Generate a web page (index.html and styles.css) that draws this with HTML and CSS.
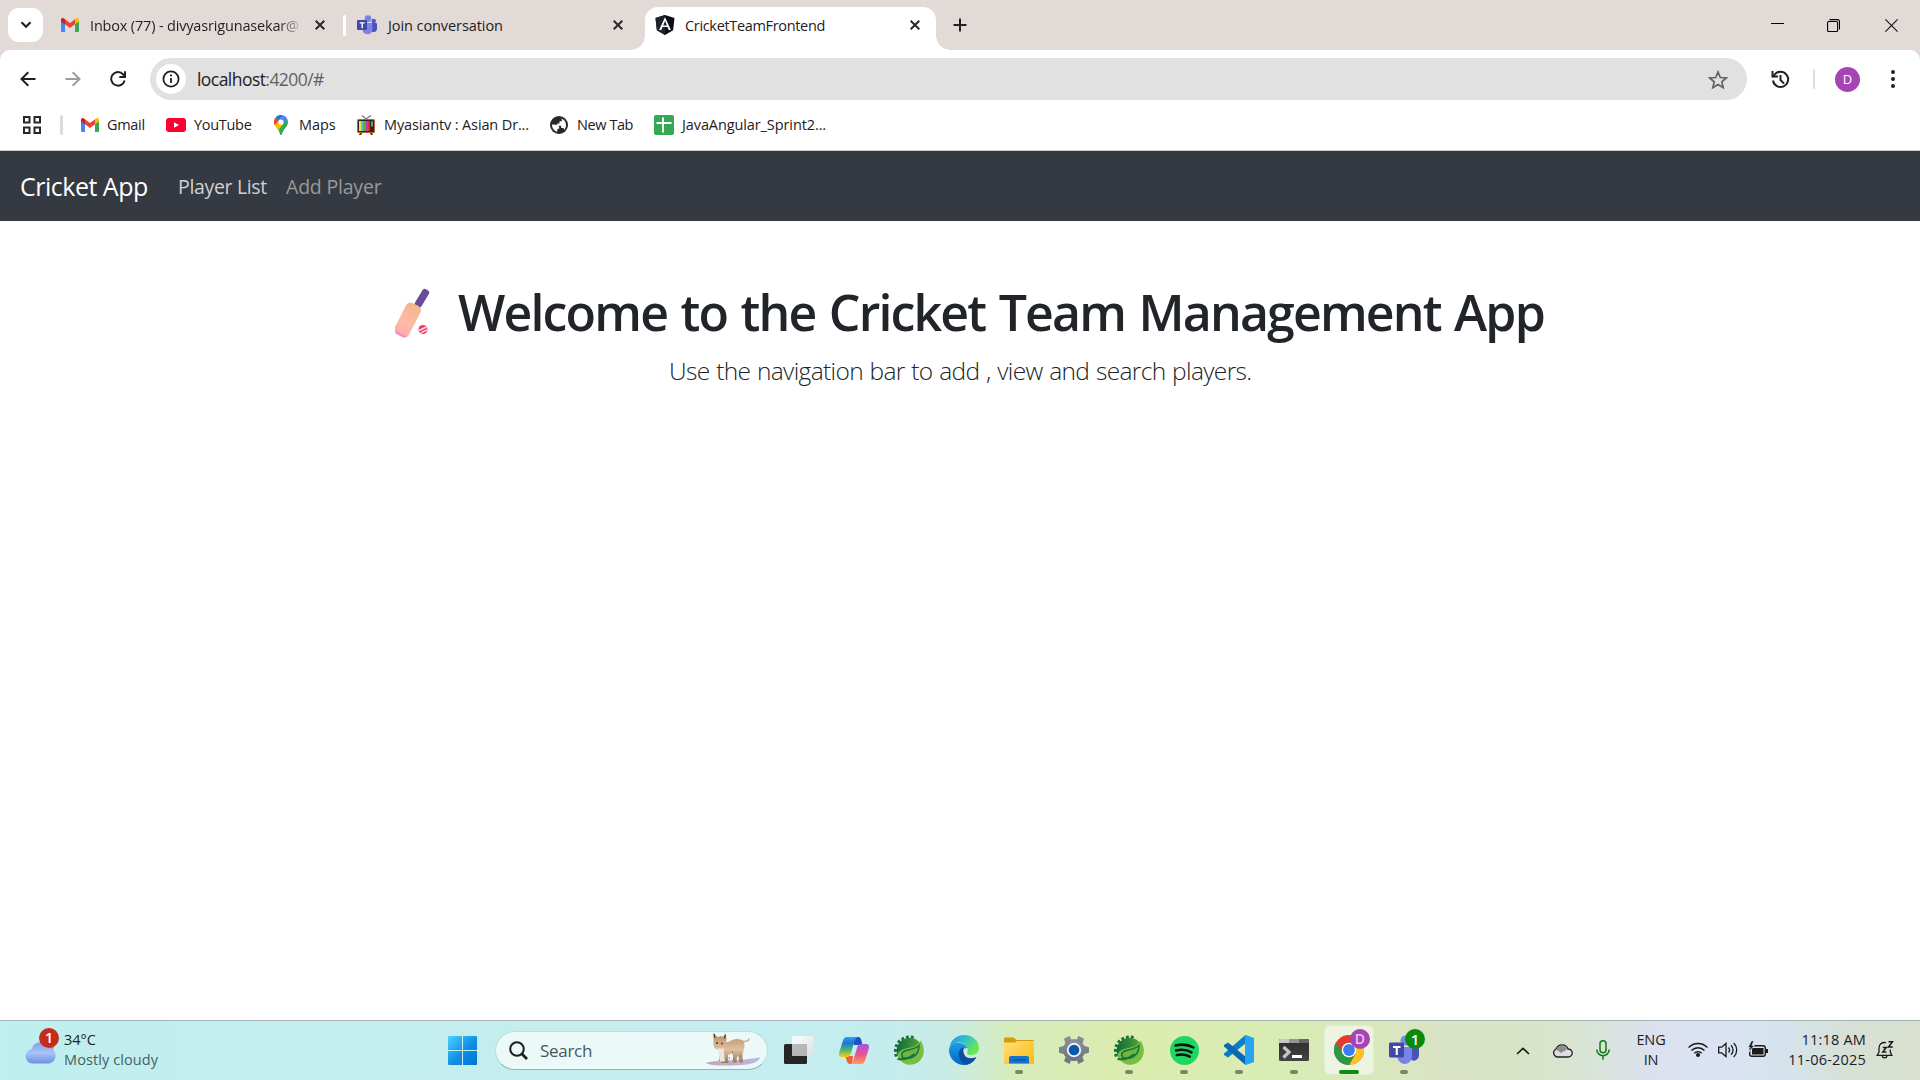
FILE: index.html
```html
<!DOCTYPE html>
<html lang="en">
<head>
<meta charset="utf-8">
<title>CricketTeamFrontend</title>
<link rel="stylesheet" href="styles.css">
</head>
<body>
<svg class="defs" aria-hidden="true">
  <defs>
    <linearGradient id="spring-bg" x1="0" y1="0" x2="1" y2="0"><stop offset="0" stop-color="#0c6b37"/><stop offset="1" stop-color="#58a63a"/></linearGradient>
    <linearGradient id="win" x1="0" y1="0" x2="1" y2="1"><stop offset="0" stop-color="#4dd0ff"/><stop offset=".55" stop-color="#108ee4"/><stop offset="1" stop-color="#0074d6"/></linearGradient>
    <linearGradient id="cloud" x1="0" y1="0" x2="0" y2="1"><stop offset="0" stop-color="#7f9fe8"/><stop offset=".5" stop-color="#a9c4f8"/><stop offset="1" stop-color="#6c90e0"/></linearGradient>
    <linearGradient id="cop1" x1="0" y1="0" x2="0" y2="1"><stop offset="0" stop-color="#1fa5ee"/><stop offset=".3" stop-color="#2373d8"/><stop offset=".65" stop-color="#4bb56c"/><stop offset="1" stop-color="#f8d30b"/></linearGradient>
    <linearGradient id="cop2" x1="0" y1="0" x2="0" y2="1"><stop offset="0" stop-color="#a553ea"/><stop offset=".55" stop-color="#f0528a"/><stop offset="1" stop-color="#ffa250"/></linearGradient>
    <linearGradient id="edge1" x1="0" y1="0" x2="1" y2=".5"><stop offset="0" stop-color="#1e8fe0"/><stop offset=".5" stop-color="#30bfd0"/><stop offset="1" stop-color="#66ea50"/></linearGradient>
    <linearGradient id="edge2" x1="0" y1="0" x2="0" y2="1"><stop offset="0" stop-color="#209be4"/><stop offset="1" stop-color="#0067c6"/></linearGradient>
    <linearGradient id="fold" x1="0" y1="0" x2="1" y2="1"><stop offset="0" stop-color="#ffe07a"/><stop offset="1" stop-color="#fdb913"/></linearGradient>
    <linearGradient id="gear" x1="0" y1="0" x2="0" y2="1"><stop offset="0" stop-color="#8b949e"/><stop offset="1" stop-color="#68717c"/></linearGradient>
    <linearGradient id="bat" x1="0" y1="0" x2="0" y2="1"><stop offset="0" stop-color="#f5b48f"/><stop offset=".6" stop-color="#fdbba6"/><stop offset=".88" stop-color="#fdb0a8"/><stop offset="1" stop-color="#fa7dc8"/></linearGradient>
    <linearGradient id="term" x1="0" y1="0" x2="0" y2="1"><stop offset="0" stop-color="#2c2c2c"/><stop offset="1" stop-color="#444"/></linearGradient>
    <linearGradient id="tv1" x1="0" y1="0" x2="1" y2="1"><stop offset="0" stop-color="#fff"/><stop offset="1" stop-color="#dedede"/></linearGradient>
    <linearGradient id="shadow" x1="0" y1="0" x2="1" y2="0"><stop offset="0" stop-color="#c9a5b4"/><stop offset="1" stop-color="#b9b8e2"/></linearGradient>
    <linearGradient id="fur" x1="0" y1="0" x2="0" y2="1"><stop offset="0" stop-color="#b98a64"/><stop offset=".55" stop-color="#dfc0a2"/><stop offset="1" stop-color="#94785f"/></linearGradient>
    <symbol id="gmail" viewBox="0 0 18 14">
      <path fill="#4285f4" d="M0 2.5 4 5v9H1.3A1.3 1.3 0 0 1 0 12.7z"/>
      <path fill="#34a853" d="M14 5l4-2.5v10.2a1.3 1.3 0 0 1-1.3 1.3H14z"/>
      <path fill="#ea4335" d="M4 1.3 9 5l5-3.700v5L9 10 4 6.300z"/>
      <path fill="#c5221f" d="M0 2C0 .2 2-.6 3.400.8L4 1.300v5L0 3.400z"/>
      <path fill="#fbbc04" d="M14 1.300l.6-.5C16-.6 18 .2 18 2v1.400l-4 2.900z"/>
    </symbol>
    <symbol id="teams" viewBox="0 0 30 30">
      <circle cx="25" cy="9" r="3.400" fill="#5059c9"/>
      <path fill="#4a53bc" d="M20 12h8.600c.8 0 1.400.6 1.400 1.400v7.200a5 5 0 0 1-8 4z"/>
      <circle cx="16.500" cy="5.500" r="5" fill="#7b83eb"/>
      <path fill="#7b83eb" d="M9 12h14v10.500a7.300 7.300 0 0 1-14.500 0z"/>
      <rect x="0" y="7.500" width="15" height="15" rx="1.400" fill="#4048a8"/>
      <path fill="#fff" d="M4 11h7.500v1.900H8.800v7H6.700v-7H4z"/>
    </symbol>
    <symbol id="close" viewBox="0 0 10 10"><path d="M.7.7l8.600 8.600M9.300.7.7 9.300" stroke="#26292b" stroke-width="2" fill="none"/></symbol>
    <symbol id="spring" viewBox="0 0 30 30">
      <path d="M2.500 21.500A14 14 0 0 1 21.500 3.500" fill="none" stroke="#16703a" stroke-width="3.200" stroke-dasharray="2.800 2"/>
      <circle cx="15.500" cy="15.500" r="12.800" fill="url(#spring-bg)"/>
      <path fill="#77be43" d="M26.500 5.500C30.500 11 31.500 20 26 25.500c-5 5.500-13 5.500-18 1.500L4 23C2.500 16.500 8 14 14 13c6-1 10.500-3 12.500-7.500z"/>
      <path fill="#6fb641" stroke="#16733c" stroke-width="1.500" d="M8.500 22.500C6 17.500 9.500 16 14 15c4.500-1 8-1.500 11-4.500 0 11-9 14.500-16.500 12z"/>
      <path fill="none" stroke="#16733c" stroke-width="2" d="M3.500 24c6 1 12-.5 17-5"/>
    </symbol>
  </defs>
</svg>

<header class="browser">
  <div class="tabstrip">
    <button class="tab-search"><svg width="12" height="8" viewBox="0 0 12 8"><path d="M1.500 1.300 6 5.800l4.500-4.500" fill="none" stroke="#202124" stroke-width="2.200"/></svg></button>
    <div class="tab tab-mail">
      <svg width="18" height="14"><use href="#gmail"/></svg>
      <span class="tab-title fade">Inbox (77) - divyasrigunasekar@</span>
      <svg class="tab-close" width="10" height="10"><use href="#close"/></svg>
    </div>
    <i class="tab-divider"></i>
    <div class="tab tab-teams">
      <svg width="20" height="20"><use href="#teams"/></svg>
      <span class="tab-title">Join conversation</span>
      <svg class="tab-close" width="10" height="10"><use href="#close"/></svg>
    </div>
    <div class="tab tab-active">
      <svg width="20" height="20" viewBox="0 0 20 20"><path fill="#0b0d18" d="M10 0l9.500 3-1.400 12.300L10 20l-8.100-4.700L.5 3z"/><path fill="#20222e" d="M10 0v20l-8.100-4.700L.5 3z"/><path fill="#fff" d="M10 2.200l5.900 12.700h-2.200l-1.200-2.800h-5l-1.200 2.800H4.100zm0 3.900L8.200 10.400h3.600z"/></svg>
      <span class="tab-title">CricketTeamFrontend</span>
      <svg class="tab-close" width="10" height="10"><use href="#close"/></svg>
    </div>
    <button class="new-tab"><svg width="14" height="14" viewBox="0 0 14 14"><path d="M7 .5v13M.5 7h13" stroke="#202124" stroke-width="2"/></svg></button>
    <div class="window-controls">
      <svg width="13" height="13" viewBox="0 0 13 13"><path d="M0 4.500h13" stroke="#000"/></svg>
      <svg width="13" height="13" viewBox="0 0 13 13" fill="none" stroke="#000" stroke-width="1.100"><rect x=".6" y="2.500" width="10" height="10" rx="1"/><path d="M2.500.6H10.500a2 2 0 0 1 2 2V10.500"/></svg>
      <svg width="13" height="13" viewBox="0 0 13 13"><path d="M.4.4l12.200 12.200M12.600.4.4 12.600" stroke="#111" stroke-width="1.100"/></svg>
    </div>
  </div>

  <div class="toolbar">
    <div class="nav-buttons">
      <svg width="16" height="16" viewBox="0 0 16 16" fill="none" stroke="#202124" stroke-width="2"><path d="M15.500 8H2M8.300 1.200 1.500 8l6.800 6.800"/></svg>
      <svg width="16" height="16" viewBox="0 0 16 16" fill="none" stroke="#9c9c9c" stroke-width="2"><path d="M.5 8H14M7.700 1.200 14.500 8l-6.800 6.800"/></svg>
      <svg width="16" height="16" viewBox="0 0 16 16" fill="none" stroke="#202124" stroke-width="2"><path d="M14.600 9.500A6.800 6.800 0 1 1 13 3.200l1.500 2"/><path d="M15 .3v5.700H9.300"/></svg>
    </div>
    <div class="omnibox">
      <span class="site-info"><svg width="18" height="18" viewBox="0 0 18 18"><circle cx="9" cy="9" r="7.600" fill="none" stroke="#202124" stroke-width="1.800"/><path d="M9 8v5" stroke="#202124" stroke-width="1.800"/><circle cx="9" cy="5.500" r="1.100" fill="#202124"/></svg></span>
      <span class="url">localhost<span class="url-rest">:4200/#</span></span>
      <svg class="star" width="20" height="19" viewBox="0 0 20 19"><path d="M10 2l2.300 5.500 6 .5-4.500 3.900 1.400 5.800L10 14.600l-5.200 3.100 1.400-5.800L1.700 8l6-.5z" fill="none" stroke="#5f6368" stroke-width="1.700"/></svg>
    </div>
    <svg class="history" width="19" height="19" viewBox="0 0 19 19" fill="none" stroke="#202124" stroke-width="2"><path d="M2 10.500A7.600 7.600 0 1 0 3.300 5L1.800 6.800"/><path d="M1.500 1v5.500H7M9.500 5v5l3.600 3.600"/></svg>
    <i class="bar-divider"></i>
    <span class="avatar">D</span>
    <svg class="menu" width="4" height="18" viewBox="0 0 4 18" fill="#202124"><circle cx="2" cy="2" r="2"/><circle cx="2" cy="9" r="2"/><circle cx="2" cy="16" r="2"/></svg>
  </div>

  <div class="bookmarks">
    <svg width="18" height="18" viewBox="0 0 18 18" fill="none" stroke="#26292b" stroke-width="2"><path d="M1 1h5.500v5.500H1zM11.500 1H17v5.500h-5.500zM1 11.500h5.500V17H1zM11.500 11.500H17V17h-5.500z"/></svg>
    <i class="bar-divider"></i>
    <a class="bm bm-gmail"><svg width="18" height="14"><use href="#gmail"/></svg><span>Gmail</span></a>
    <a class="bm bm-yt"><svg width="20" height="14" viewBox="0 0 20 14"><rect width="20" height="14" rx="3" fill="#f03"/><path d="M8 4.200v5.600L13 7z" fill="#fff"/></svg><span>YouTube</span></a>
    <a class="bm bm-maps"><svg width="14" height="20" viewBox="0 0 14 20"><path fill="#34a853" d="M13.500 4.500A7 7 0 0 1 14 7c0 5-5 7-6 12.200-.3 1.100-1.700 1.100-2 0C5.400 16.300 4 14.700 2.700 12.800z"/><path fill="#fbbc04" d="M4.500 5 9.500 9l-5 6C2.500 12.500 0 10.500 0 7z"/><path fill="#ea4335" d="M1.600 2.500 5 5.300.7 10A7 7 0 0 1 1.600 2.500z"/><path fill="#1a73e8" d="M1.600 2.500A7 7 0 0 1 9 .3L4.800 5.400z"/><path fill="#4285f4" d="M9 .3a7 7 0 0 1 4.500 4.200L9 9.300 4.800 5.400z"/><circle cx="7" cy="7" r="2.600" fill="#fff"/></svg><span>Maps</span></a>
    <a class="bm bm-tv"><svg width="18" height="20" viewBox="0 0 18 20"><path d="M5 .5 9 4l5-3.500" fill="none" stroke="#6c7780" stroke-width="1.200"/><path d="M3 17h3l-2 3H2zM12 17h3l1 3h-2z" fill="#5a3418"/><rect y="4" width="18" height="14" rx="1.500" fill="#b6672a"/><rect x="1" y="5" width="16" height="12" rx="1" fill="#2c2420"/><path fill="#e8e45a" d="M2 6h3v10H2z"/><path fill="#5cc6d0" d="M4 6h2v10H4z"/><path fill="#48b83c" d="M6 6h3v10H6z"/><path fill="#c33ab0" d="M9 6h2v10H9z"/><path fill="#e22b2b" d="M11 6h2v10h-2z"/><path fill="#8a8f94" d="M14 6.500h2v5h-2z"/></svg><span>Myasiantv : Asian Dr...</span></a>
    <a class="bm bm-new"><svg width="18" height="18" viewBox="0 0 18 18"><circle cx="9" cy="9" r="9" fill="#25272b"/><path fill="#fff" d="M2 8.500l5 .2 2.200 2v2H7.500l-.3 3.100C4 15 2 12 2 8.500zM10.500 2.200C14 3 16 5.700 16 9c0 2-.6 3.500-1.600 4.700l-1-1.700h-2.200V9.700H7.300V7.500h2.200V5.300h2.300V3.200z"/></svg><span>New Tab</span></a>
    <a class="bm bm-sheet"><svg width="20" height="20" viewBox="0 0 20 20"><rect width="20" height="20" rx="2" fill="#34a853"/><path d="M9 2.500v15M2.500 8h15" stroke="#fff" stroke-width="2"/></svg><span>JavaAngular_Sprint2...</span></a>
  </div>
</header>

<nav class="navbar">
  <a class="brand">Cricket App</a>
  <a class="nav-link active">Player List</a>
  <a class="nav-link">Add Player</a>
</nav>

<main class="welcome">
  <h1>
    <svg width="36" height="52" viewBox="0 0 36 52"><rect x="-3.500" y="-1" width="7.500" height="20" rx="3" fill="#6a4a9a" transform="translate(31.300 2.500) rotate(31)"/><rect x="-8" y="0" width="16" height="35" rx="5" fill="url(#bat)" transform="translate(20.500 16.500) rotate(27)"/><circle cx="28" cy="41.500" r="4.500" fill="#ee3c5a"/><path d="M24 42.500l7.500-3.500M26 44.800l6-3" stroke="#ffd9f0" stroke-width="1.400"/></svg>
    <span>Welcome to the Cricket Team Management App</span>
  </h1>
  <p class="lead">Use the navigation bar to add , view and search players.</p>
</main>

<footer class="taskbar">
  <div class="weather">
    <svg width="35" height="38" viewBox="0 0 35 38"><circle cx="22" cy="17" r="7.500" fill="#f08a1c"/><path d="M7.500 35.500a7.200 7.200 0 0 1-1-14.300 9.500 9.500 0 0 1 17.500-2 8.300 8.300 0 0 1 0 16.300z" fill="url(#cloud)"/><circle cx="24" cy="10" r="10" fill="#c42b1c"/><text x="24" y="15.300" text-anchor="middle" class="badge-text">1</text></svg>
    <div class="weather-text"><span>34°C</span><span class="sky">Mostly cloudy</span></div>
  </div>
  <div class="apps">
    <span class="app"><svg width="29" height="29" viewBox="0 0 29 29" fill="url(#win)"><rect width="29" height="29" rx="1"/><path d="M14.500 0v29M0 14.500h29" stroke="#c4eeee"/></svg></span>
    <div class="search">
      <svg width="19" height="19" viewBox="0 0 19 19" fill="none" stroke="#1c1c1c" stroke-width="2"><circle cx="8" cy="8" r="6.800"/><path d="M13 13l5 5" stroke-width="2.600"/></svg>
      <span class="search-label">Search</span>
      <svg class="lynx" width="56" height="34" viewBox="0 0 56 34"><path d="M0 30c6-3 35-2 54-5.500-1 4-7 6-13 7-14 1.300-35 2-41-1.500z" fill="url(#shadow)"/><path fill="url(#fur)" d="M7.500 0l4 4c2-.8 4-.8 5.500-.3L19.500 1c1.300 3 1.300 6 .5 8 4 .3 6-3 11-3 3 0 5 1.200 7 2l4-1V5.500h1.500L43 8l-5 1.500c1 3 .3 6-.5 8l-1 5 .5 7h-3.500l-1-6-1.500 0-.5 6H26.500l.7-6L26 20c-1.500 1-3 1.500-4 1.500l.5 8.500h-7.500l.5-2h-3c1.500-3 1.500-6 .5-11-4-.5-6-3-5.500-7z"/><path d="M12 15c2 1.300 4 .8 5.500-.5l1.500 14h-5z" fill="#f0e5da"/><circle cx="11" cy="10" r=".9" fill="#3a3a20"/><circle cx="16" cy="10.500" r=".9" fill="#3a3a20"/><path d="M8 1l.8 4M19.300 1.500l-.8 4" stroke="#4a3422" stroke-width="1.200"/><path d="M26 19h1m-4 6h1m10-2h1m-8 3h1" stroke="#7a522f"/></svg>
    </div>
    <span class="app"><svg width="30" height="28" viewBox="0 0 30 28"><rect y="8" width="23" height="20" rx="1.500" fill="#262626"/><rect x="8" width="22" height="20" rx="1.500" fill="url(#tv1)" opacity=".92"/><path d="M8 8h15v12H8z" fill="#aaa" opacity=".75"/></svg></span>
    <span class="app"><svg width="30" height="27" viewBox="0 0 30 27"><path fill="#1d4fc6" d="M13 0h6c2 0 3 1.500 3.500 4l1 4H15z"/><path fill="#f0603c" d="M6 19h8l-1 8h-2c-2 0-3-2-3.500-4z"/><path fill="url(#cop1)" d="M8 0h11c-2 .5-3 2-4 6l-3 10c-.6 2.500-2 4-5 4H3c-3 0-3.500-2-2.700-5L4 3.500C4.800 1 6 0 8 0z"/><path fill="url(#cop2)" d="M22 27H11c2-.5 3-2 4-6l3-10c.6-2.500 2-4 5-4h4c3 0 3.500 2 2.700 5L26 23.500c-.8 2.500-2 3.500-4 3.500z"/></svg></span>
    <span class="app"><svg width="30" height="30"><use href="#spring"/></svg></span>
    <span class="app"><svg width="30" height="30" viewBox="0 0 30 30"><path fill="url(#edge2)" d="M0 15C1 9 6 7 11 8c4 .5 7 3 7 5-4 0-5 3-4 6 1.500 4.500 7 5.500 13 3.500C24 27.500 20 30 15 30 6.500 30 0 23 0 15z"/><path fill="#0c4fa0" d="M14 12c-5 3-6 9-2 14 2.500 3 5 4 7 3.300 4-1.300 7-4 8.500-7.300-5 2.300-10 1.500-12-2-1.600-3-1-5.500-1.500-8z"/><path fill="url(#edge1)" d="M.3 13C1.500 5 8 0 15 0c9 0 15 6 15 13 0 5-4 7-8 7-3 0-4.500-1.300-3.500-3C20 13 16 7.500 10 7.500c-4.500 0-8 2-9.700 5.500z"/></svg></span>
    <span class="app running"><svg width="30" height="27" viewBox="0 0 30 27"><path fill="#d99a0a" d="M0 2c0-1 .6-1.500 1.500-1.500h8c1 0 2 2.500 3.500 2.500h15.500c1 0 1.500.5 1.500 1.500V10H0z"/><path fill="url(#fold)" d="M0 5.500h11l2-1.500h17v23H0z"/><path fill="#1275cc" d="M5 26.500V21c0-1.200.8-2 2-2h16c1.200 0 2 .8 2 2v5.500z"/><path d="M8.500 23h13" stroke="#0a4c95" stroke-width="1.200"/></svg></span>
    <span class="app"><svg width="30" height="28" viewBox="0 0 30 28"><g fill="url(#gear)"><circle cx="15" cy="14" r="11"/><path d="M11.500 4 10.500.5l-5 2.500 1.500 4zM18.500 4l1-3.500 5 2.500-1.500 4zM11.500 24l-1 3.500-5-2.500 1.500-4zM18.500 24l1 3.500 5-2.500-1.500-4zM5 10.500l-4.500 1v5l4.500 1zM25 10.500l4.500 1v5l-4.500 1z" stroke="#7a838d" stroke-width="1" stroke-linejoin="round"/></g><circle cx="15" cy="14" r="7.200" fill="#eef2f5"/><circle cx="15" cy="14" r="5.300" fill="#0a58ad"/></svg></span>
    <span class="app running"><svg width="30" height="30"><use href="#spring"/></svg></span>
    <span class="app running"><svg width="29" height="29" viewBox="0 0 29 29"><circle cx="14.500" cy="14.500" r="14.500" fill="#1ed760"/><path d="M5.500 9.500c6-1.500 12.500-1 18 2M6 14.500c5-1.200 11-.8 15.500 1.900M6.800 19c4.500-1 9-.6 13 1.600" fill="none" stroke="#111" stroke-width="2.500" stroke-linecap="round"/></svg></span>
    <span class="app running"><svg width="30" height="30" viewBox="0 0 30 30"><path fill="#0a7dca" d="M21.500 0l.5 8L4 22.500 0 20v-1.500z"/><path fill="#0b68b3" d="M21.500 30l.5-8L4 7.500 0 10v1.500z"/><path fill="#27a5f2" d="M22 0l8 3v24l-8 3c-.6 0-1-.3-1-1V1c0-.6.400-1 1-1z"/></svg></span>
    <span class="app running"><svg width="30" height="22" viewBox="0 0 30 22"><rect width="30" height="22" rx="1.500" fill="url(#term)"/><path fill="#c8c8c8" d="M0 4V1.500Q0 0 1.500 0H10v4z"/><path fill="#949494" d="M10 0h10v4H10z"/><path fill="#666" d="M20 0h8.500Q30 0 30 1.500V4H20z"/><path d="M4.500 8l5.500 5-5.500 5.500" fill="none" stroke="#c4c4c4" stroke-width="3.200"/><path d="M13 17.500h10" stroke="#fff" stroke-width="3"/></svg></span>
    <span class="app running current"><svg width="36" height="36" viewBox="0 0 36 36"><circle cx="15" cy="21" r="15" fill="#e33b2e"/><path fill="#fcc31e" d="M15 14h13.300A15 15 0 0 1 15 36l6.500-11.300z"/><path fill="#2a9a47" d="M2 13.500A15 15 0 0 0 15 36l6.500-11.300H9z"/><circle cx="15" cy="21" r="7.300" fill="#fff"/><circle cx="15" cy="21" r="5.900" fill="#3b7ded"/><circle cx="26" cy="10" r="10" fill="#a743b5"/><text x="26" y="15" text-anchor="middle" class="badge-letter">D</text></svg></span>
    <span class="app running"><svg width="36" height="36" viewBox="0 0 36 36"><use href="#teams" x="0" y="6" width="30" height="30"/><circle cx="26" cy="10" r="10" fill="#0a8a08"/><text x="26" y="15.500" text-anchor="middle" class="badge-text">1</text></svg></span>
  </div>
  <div class="tray">
    <svg width="14" height="8" viewBox="0 0 14 8"><path d="M1 7l6-5.700L13 7" fill="none" stroke="#1a1a1a" stroke-width="1.700"/></svg>
    <svg class="onedrive" width="21" height="14" viewBox="0 0 21 14"><path d="M5 13a4.200 4.200 0 0 1-.8-8C6-.3 14-.6 16 5a4 4 0 0 1 .5 8z" fill="#ddd" stroke="#222" stroke-width="1.300"/><path d="M4.500 5.500C7 .5 13 .5 15 5.500L9 9z" fill="#8c8c8c"/></svg>
    <svg class="mic" width="14" height="20" viewBox="0 0 14 20" fill="none" stroke="#107c10" stroke-width="1.500"><rect x="4" y=".8" width="6" height="12" rx="3"/><path d="M.8 9.500a6.200 6.200 0 0 0 12.400 0M7 16v3.800"/></svg>
    <div class="lang"><span>ENG</span><span>IN</span></div>
    <svg class="wifi" width="20" height="15" viewBox="0 0 20 15" fill="none" stroke="#1a1a1a" stroke-width="1.400"><path d="M.6 5.500a13 13 0 0 1 18.800 0M3.500 8.500a9 9 0 0 1 13 0M6.300 11.300a5.200 5.200 0 0 1 7.400 0"/><circle cx="10" cy="13" r="1.300" fill="#1a1a1a"/></svg>
    <svg class="sound" width="20" height="16" viewBox="0 0 20 16" fill="none" stroke="#1a1a1a" stroke-width="1.300"><path d="M.7 5.200h3L8 1.400v13.200L3.700 10.800h-3zM10.500 5.500c1.300 1.500 1.300 3.500 0 5M13 3.200c2.700 2.800 2.700 6.800 0 9.600M15.700 1c4 4 4 10 0 14"/></svg>
    <svg class="battery" width="20" height="17" viewBox="0 0 20 17"><rect x="1.700" y="4.700" width="15.600" height="10.600" rx="2.200" fill="none" stroke="#1a1a1a" stroke-width="1.400"/><path d="M18 8h2v4h-2zM4 7h11.500v6.500H4z" fill="#1a1a1a"/><path d="M3.500-.3 0 6.500h2.200L1 11l5.500-6.500H3.900L6-.3z" fill="#1a1a1a" stroke="#d9e3ef" stroke-width=".8"/></svg>
    <div class="clock"><span>11:18 AM</span><span>11-06-2025</span></div>
    <svg class="bell" width="18" height="18" viewBox="0 0 18 18" fill="none" stroke="#1a1a1a" stroke-width="1.300"><path d="M10 1.600C5.500.9 3 3.500 3 7v4L1.200 14.300h14.600L14.300 11V8.500M6.200 14.800c.4 2.700 4.400 2.700 4.800 0"/><path d="M6.800 6.500h3.400L6.800 11h3.600M12.500.8h4L12.500 6h4.300" stroke-width="1.500"/></svg>
  </div>
</footer>
</body>
</html>
```
FILE: styles.css
```css
* { box-sizing: border-box; }
html, body { height: 100%; }
body {
  margin: 0;
  display: flex;
  flex-direction: column;
  background: #fff;
  color: #1f2023;
  font-family: "Open Sans", "Noto Sans", sans-serif;
  font-size: 14.5px;
  white-space: nowrap;
  overflow: hidden;
}
svg { display: block; flex: none; }
i { flex: none; }
button { border: 0; padding: 0; background: none; }
.defs { position: absolute; width: 0; height: 0; }

/* Tab strip */
.browser { flex: none; height: 151px; background: #e2dad7; border-bottom: 1px solid #c5cdcf; }
.tabstrip { height: 50px; display: flex; align-items: center; padding-left: 8px; }
.tab-search { width: 35px; height: 34px; border-radius: 11px; background: #fff; display: grid; place-items: center; }
.tab { display: flex; align-items: center; gap: 11px; }
.tab-title { line-height: 24px; padding-top: 1px; letter-spacing: -0.08px; }
.tab-close { margin-left: auto; }
.fade {
  width: 210px;
  letter-spacing: -0.17px;
  -webkit-mask-image: linear-gradient(to right, #000 90%, rgba(0, 0, 0, .15));
  mask-image: linear-gradient(to right, #000 90%, rgba(0, 0, 0, .15));
}
.tab-mail { width: 264px; margin-left: 18px; }
.tab-divider { width: 3px; height: 21px; border-radius: 2px; background: #fff; margin-left: 18px; }
.tab-teams { width: 266px; margin-left: 11px; }
.tab-active {
  position: relative;
  width: 291px;
  height: 43px;
  margin-top: 7px;
  margin-left: 22px;
  padding: 0 16px 7px 10px;
  border-radius: 13px 13px 0 0;
  background: #fff;
  gap: 10px;
}
.tab-active .tab-title { letter-spacing: -0.33px; }
.tab-active::before, .tab-active::after { content: ""; position: absolute; bottom: 0; width: 14px; height: 14px; }
.tab-active::before { left: -14px; background: radial-gradient(circle at 0 0, transparent 13.5px, #fff 14px); }
.tab-active::after { right: -14px; background: radial-gradient(circle at 100% 0, transparent 13.5px, #fff 14px); }
.new-tab { margin-left: 17px; }
.window-controls { display: flex; gap: 45px; margin-left: auto; margin-right: 22px; }
.window-controls svg:first-child { margin-right: -2px; }

/* Address bar */
.toolbar { height: 50px; display: flex; align-items: center; background: #fff; border-radius: 10px 10px 0 0; padding: 8px 25px 0 20px; }
.nav-buttons { display: flex; gap: 29px; width: 130px; }
.omnibox { width: 1597px; height: 42px; border-radius: 21px; background: #e1e1e1; display: flex; align-items: center; padding: 0 19px 0 6px; }
.site-info { width: 30px; height: 30px; border-radius: 50%; background: #fff; display: grid; place-items: center; }
.url { font-size: 17.5px; margin-left: 11px; letter-spacing: -0.55px; }
.url-rest { color: #5f6163; }
.star { margin-left: auto; }
.history { margin-left: 24px; }
.bar-divider { width: 3px; height: 20px; border-radius: 2px; background: #e2dad7; }
.toolbar .bar-divider { margin-left: 23px; width: 2px; }
.avatar { width: 25px; height: 25px; margin-left: 20px; border-radius: 50%; background: #a743b5; color: #fff; font-size: 13px; line-height: 25px; text-align: center; }
.menu { margin-left: auto; }

/* Bookmarks */
.bookmarks { height: 50px; background: #fff; display: flex; align-items: center; padding-left: 23px; }
.bookmarks .bar-divider { margin-left: 19px; }
.bm { display: flex; align-items: center; letter-spacing: -0.3px; }
.bm span { margin-top: -2px; }
.bm-gmail { width: 85px; margin-left: 18px; gap: 8px; }
.bm-yt { width: 108px; gap: 8px; }
.bm-maps { width: 83px; gap: 11px; letter-spacing: -0.05px; }
.bm-tv { width: 193px; gap: 9px; letter-spacing: -0.13px; }
.bm-new { width: 104px; gap: 9px; letter-spacing: -0.42px; }
.bm-sheet { gap: 8px; letter-spacing: -0.1px; }

/* Application */
.navbar { flex: none; height: 70px; background: #353941; display: flex; align-items: center; padding: 0 20px; }
.brand { width: 158px; color: #fff; font-size: 25px; letter-spacing: -0.5px; }
.nav-link { width: 108px; font-size: 19.5px; letter-spacing: -0.2px; color: #97999b; padding-top: 1px; }
.nav-link.active { color: #d0d1d3; letter-spacing: -0.33px; }
.welcome { flex: 1; padding-top: 59px; color: #212529; }
h1 { margin: 0; display: flex; align-items: center; height: 64px; padding-left: 395px; gap: 27px; font-size: 50px; font-weight: 600; line-height: 64px; letter-spacing: -1.82px; word-spacing: 2.2px; }
h1 svg { margin-top: 3px; }
.lead { margin: 8px 0 0; padding-left: 669px; font-size: 24.5px; font-weight: 300; line-height: 38px; letter-spacing: -0.65px; word-spacing: 0.9px; }

/* Taskbar */
.taskbar {
  flex: none;
  height: 60px;
  border-top: 1px solid #a5b3b1;
  display: flex;
  align-items: center;
  background: linear-gradient(to right, #bfefee 0, #c4eeee 450px, #c4edf0 860px, #c9ebe6 950px, #d6ecbc 1010px, #dcecaf 1120px, #d9edb2 1240px, #d8eab8 1340px, #dae4c4 1430px, #d8e4c8 1540px, #d9e4da 1600px, #dbe1ee 1650px, #dbe3f3 1720px, #d5e4ec 1790px, #d7e0d5 1850px, #d9e0cf 1920px);
}
.weather { display: flex; width: 413px; margin-left: 25px; gap: 4px; align-items: center; }
.weather > svg { margin-bottom: 7px; }
.weather-text, .lang, .clock { display: flex; flex-direction: column; line-height: 20px; margin-bottom: 1px; }
.sky { color: #48605f; letter-spacing: 0.1px; }
.badge-text { fill: #fff; font-size: 15px; font-weight: 600; }
.badge-letter { fill: #e9c6ef; font-size: 14px; font-weight: 600; }
.apps { display: flex; align-items: center; gap: 7px; margin-bottom: 1px; }
.app { position: relative; width: 48px; height: 48px; display: grid; place-items: center; border-radius: 5px; }
.app.running::after { content: ""; position: absolute; bottom: 0; left: 20px; width: 8px; height: 4px; border-radius: 2px; background: #7c8468; }
.app svg[width="36"] { margin: -6px -6px 0 0; }
.current { background: #eef4e2; box-shadow: 0 0 0 1px #e3ebd2; }
.app.current::after { left: 14px; width: 20px; background: #0a8f0a; }
.search { width: 273px; height: 39px; margin-left: 2px; border-radius: 20px; background: #ebf9f9; border: 1px solid #b5dfe0; border-bottom-color: #8fb5b7; display: flex; align-items: center; padding: 0 5px 0 13px; }
.search-label { margin-left: 12px; font-size: 17px; letter-spacing: -0.3px; color: #4b5656; }
.lynx { margin-left: auto; }
.tray { display: flex; align-items: center; margin-left: 88px; }
.onedrive { margin-left: 22px; }
.mic { margin-left: 23px; margin-bottom: 1px; }
.lang { width: 50px; margin-left: 16px; align-items: center; letter-spacing: -0.15px; }
.wifi { margin-left: 12px; margin-bottom: 3px; }
.sound { margin-left: 10px; margin-bottom: 2px; }
.battery { margin-left: 10px; margin-bottom: 2px; }
.clock { width: 88px; margin-left: 10px; align-items: flex-end; letter-spacing: 0.2px; }
.bell { margin-left: 10px; margin-bottom: 1px; }
```
